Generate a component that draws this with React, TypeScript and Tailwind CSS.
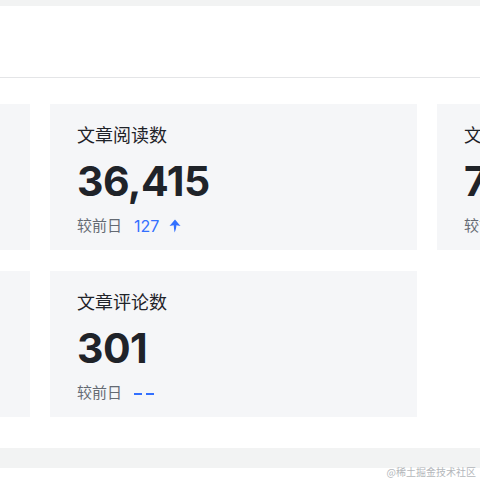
const stats = [
  { title: "文章展现数", value: "128,904", diff: "2,361", up: true },
  { title: "文章阅读数", value: "36,415", diff: "127", up: true },
  { title: "文章点赞数", value: "7,382", diff: "45", up: true },
  { title: "文章收藏数", value: "1,026", diff: "", up: false },
  { title: "文章评论数", value: "301", diff: "", up: false },
];

function ArrowUp() {
  return (
    <svg width="12" height="14" viewBox="0 0 12 14" className="ml-[10px]">
      <path d="M6 0.5 L11.5 7 L7.4 6.2 C7.2 8.8 6.8 11.2 5.6 13.5 C5.2 11.2 4.9 8.8 4.7 6.2 L0.5 7 Z" fill="#3370ff" />
    </svg>
  );
}

function StatCard({ title, value, diff, up }: (typeof stats)[number]) {
  return (
    <div className="h-[146px] bg-[#f5f6f8] pl-[27px] pt-[20px]">
      <div className="text-[18px] leading-[24px] text-[#1f2329]">{title}</div>
      <div className="mt-[8px] text-[41px] leading-[50px] font-bold tracking-[-0.5px] text-[#1f2329]">{value}</div>
      <div className="mt-[10px] flex items-center text-[15px] leading-[20px] text-[#646a73]">
        <span>较前日</span>
        {diff ? (
          <span className="ml-[12px] flex items-center text-[16px] text-[#3370ff]">
            {diff}
            {up && <ArrowUp />}
          </span>
        ) : (
          <span className="ml-[12px] flex items-center gap-[4px] pt-[2px]">
            <span className="block h-[2px] w-[8px] bg-[#3370ff]" />
            <span className="block h-[2px] w-[8px] bg-[#3370ff]" />
          </span>
        )}
      </div>
    </div>
  );
}

export default function App() {
  return (
    <div
      className="relative h-[480px] w-[480px] overflow-hidden bg-white"
      style={{ fontFamily: 'Inter, "Noto Sans CJK SC", sans-serif' }}
    >
      <div className="h-[6px] bg-[#f2f3f3]" />
      <div className="h-[72px] border-b border-[#e4e5e7] bg-white" />
      <div className="pt-[26px]">
        <div className="ml-[-337px] grid w-[1141px] grid-cols-[367px_367px_367px] gap-x-[20px] gap-y-[21px]">
          {stats.map((s) => (
            <StatCard key={s.title} {...s} />
          ))}
        </div>
      </div>
      <div className="mt-[31px] h-[20px] bg-[#f2f3f3]" />
      <div
        className="absolute right-[4px] bottom-[1px] text-[10px] leading-[14px] text-[#b4b7bb]"
        style={{ fontFamily: '"Noto Sans CJK SC", sans-serif' }}
      >
        @稀土掘金技术社区
      </div>
    </div>
  );
}
